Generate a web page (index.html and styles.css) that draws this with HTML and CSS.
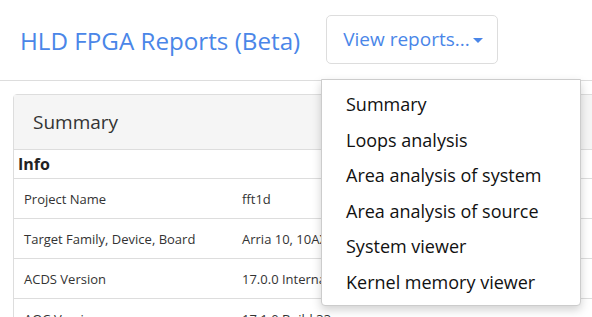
FILE: index.html
```
<!DOCTYPE html>
<html>
<head>
<meta charset="utf-8">
<link rel="stylesheet" href="styles.css">
</head>
<body>
<header class="topbar">
  <h1 class="title">HLD FPGA Reports (Beta)</h1>
  <div class="menu-wrap">
    <button class="view-btn">View reports...<span class="caret"></span></button>
  </div>
</header>
<main class="content">
  <section class="panel">
    <div class="panel-head">Summary</div>
    <table class="info">
      <colgroup><col class="col1"><col></colgroup>
      <tr class="info-title"><th colspan="2">Info</th></tr>
      <tr><td>Project Name</td><td>fft1d</td></tr>
      <tr><td>Target Family, Device, Board</td><td>Arria 10, 10AX115U1F45I1SG, a10gx</td></tr>
      <tr><td>ACDS Version</td><td>17.0.0 Internal Build</td></tr>
      <tr><td>AOC Version</td><td>17.1.0 Build 33</td></tr>
    </table>
  </section>
</main>
<ul class="dropdown">
  <li>Summary</li>
  <li>Loops analysis</li>
  <li>Area analysis of system</li>
  <li>Area analysis of source</li>
  <li>System viewer</li>
  <li>Kernel memory viewer</li>
</ul>
</body>
</html>
```
FILE: styles.css
```
html, body {
  margin: 0;
  padding: 0;
  overflow: hidden;
  background: #fff;
}
body {
  font-family: "Open Sans", "Noto Sans", sans-serif;
  color: #333;
  width: 592px;
  height: 317px;
  position: relative;
}
.topbar {
  display: flex;
  align-items: center;
  height: 81px;
  border-bottom: 1px solid #ddd;
  box-sizing: border-box;
}
.title {
  margin: 0 0 0 20px;
  font-size: 24.2px;
  font-weight: 400;
  color: #4a86e8;
}
.menu-wrap {
  margin-left: 26px;
  margin-top: -2px;
}
.view-btn {
  font-family: inherit;
  font-size: 19px;
  color: #4a86e8;
  background: #fff;
  border: 1px solid #ddd;
  border-radius: 5px;
  height: 49px;
  width: 172px;
  padding: 0 0 0 16px;
  text-align: left;
  display: flex;
  align-items: center;
}
.caret {
  display: inline-block;
  width: 0;
  height: 0;
  border-left: 5px solid transparent;
  border-right: 5px solid transparent;
  border-top: 5px solid #4a86e8;
  margin-left: 3px;
  margin-top: 3px;
}
.content {
  padding: 13px 0 0 13px;
}
.panel {
  border: 1px solid #ddd;
  border-radius: 4px 4px 0 0;
  width: 640px;
}
.panel-head {
  background: #f5f5f5;
  height: 54px;
  border-bottom: 1px solid #ddd;
  display: flex;
  align-items: center;
  padding-left: 19px;
  font-size: 19px;
  color: #333;
}
.info {
  width: 100%;
  table-layout: fixed;
  border-collapse: collapse;
  font-size: 13px;
}
.col1 {
  width: 218px;
}
.info-title th {
  text-align: left;
  font-size: 16px;
  font-weight: 700;
  height: 28px;
  padding: 0 4px;
  border-bottom: 1px solid #ddd;
  color: #222;
}
.info td {
  height: 39px;
  padding: 0 10px;
  border-bottom: 1px solid #ddd;
  white-space: nowrap;
  overflow: hidden;
}
.dropdown {
  position: absolute;
  left: 321px;
  top: 79px;
  width: 260px;
  height: 227px;
  box-sizing: border-box;
  margin: 0;
  padding: 7px 0 0 0;
  list-style: none;
  background: #fff;
  border: 1px solid #ccc;
  border-radius: 0 0 4px 4px;
  box-shadow: 0 4px 10px rgba(0,0,0,0.18);
}
.dropdown li {
  height: 35.6px;
  line-height: 35.6px;
  padding-left: 24px;
  font-size: 18px;
  color: #111;
  white-space: nowrap;
}
```
